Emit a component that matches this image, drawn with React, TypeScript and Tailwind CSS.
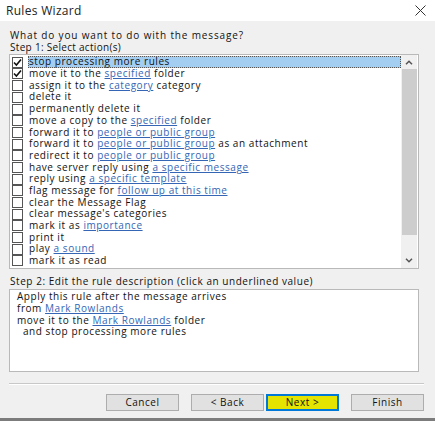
import React from "react";

type Seg = [string, boolean?];

const rows: Seg[][] = [
  [["stop processing more rules"]],
  [["move it to the "], ["specified", true], [" folder"]],
  [["assign it to the "], ["category", true], [" category"]],
  [["delete it"]],
  [["permanently delete it"]],
  [["move a copy to the "], ["specified", true], [" folder"]],
  [["forward it to "], ["people or public group", true]],
  [["forward it to "], ["people or public group", true], [" as an attachment"]],
  [["redirect it to "], ["people or public group", true]],
  [["have server reply using "], ["a specific message", true]],
  [["reply using "], ["a specific template", true]],
  [["flag message for "], ["follow up at this time", true]],
  [["clear the Message Flag"]],
  [["clear message's categories"]],
  [["mark it as "], ["importance", true]],
  [["print it"]],
  [["play "], ["a sound", true]],
  [["mark it as read"]],
];

function Segs({ segs }: { segs: Seg[] }) {
  return (
    <span className="whitespace-pre">
      {segs.map(([t, link], i) =>
        link ? (
          <span key={i} className="text-[#3466b5] underline underline-offset-[1px] decoration-[#3466b5]">
            {t}
          </span>
        ) : (
          <span key={i}>{t}</span>
        )
      )}
    </span>
  );
}

function Check() {
  return (
    <svg width="9" height="9" viewBox="0 0 9 9" className="block">
      <path d="M1 4.5 L3.4 7 L8 1.5" fill="none" stroke="#111" strokeWidth="1.6" />
    </svg>
  );
}

function Chevron({ up }: { up?: boolean }) {
  return (
    <svg width="8" height="5" viewBox="0 0 8 5" className="block">
      <path d={up ? "M1 4.2 L4 1.2 L7 4.2" : "M1 0.8 L4 3.8 L7 0.8"} fill="none" stroke="#555" strokeWidth="1.5" />
    </svg>
  );
}

export default function App() {
  return (
    <div
      className="w-[435px] h-[421px] bg-[#f0f0f0] flex flex-col overflow-hidden text-[#111] text-[10px] leading-[11.7px] tracking-[0.55px]"
      style={{ fontFamily: '"Open Sans", "Noto Sans", Arial, sans-serif' }}
    >
      <div className="h-[21px] bg-white flex items-center justify-between pl-[6px] pr-[9px] shrink-0">
        <span className="text-[12px] tracking-[0.3px] text-[#222]">Rules Wizard</span>
        <svg width="11" height="11" viewBox="0 0 11 11">
          <path d="M0.5 0.5 L10.5 10.5 M10.5 0.5 L0.5 10.5" stroke="#333" strokeWidth="1" />
        </svg>
      </div>

      <div className="pl-[9px] pr-[11px] pt-[9px] flex flex-col">
        <div className="pl-[1px] tracking-[0.85px]">What do you want to do with the message?</div>
        <div className="pl-[1px] tracking-[0.3px]">Step 1: Select action(s)</div>

        <div className="mt-[1px] w-[410px] h-[215px] bg-white border border-[#b9b9b9] flex">
          <div className="flex-1 pt-[1px] flex flex-col">
            {rows.map((segs, i) => {
              const checked = i < 2;
              const sel = i === 0;
              return (
                <div key={i} className="h-[11.7px] flex items-center pl-[2px]">
                  <div className="w-[11px] h-[11px] border border-[#555] bg-white flex items-center justify-center shrink-0">
                    {checked && <Check />}
                  </div>
                  <div
                    className={
                      "ml-[5px] h-full flex items-center pl-[1px] whitespace-nowrap " +
                      (sel ? "flex-1 bg-[#a3cdf1] outline outline-1 outline-dotted outline-[#555] -outline-offset-1" : "")
                    }
                  >
                    <Segs segs={segs} />
                  </div>
                </div>
              );
            })}
          </div>
          <div className="w-[16px] mr-[1px] bg-[#f0f0f0] flex flex-col items-center">
            <div className="h-[14px] flex items-center justify-center">
              <Chevron up />
            </div>
            <div className="w-[15px] h-[166px] bg-[#cdcdcd]" />
            <div className="flex-1" />
            <div className="h-[16px] flex items-center justify-center">
              <Chevron />
            </div>
          </div>
        </div>

        <div className="mt-[7px] pl-[1px]">Step 2: Edit the rule description (click an underlined value)</div>
        <div className="mt-[1px] w-[410px] h-[83px] bg-white border border-[#b9b9b9] pl-[7px] pt-[1px] whitespace-nowrap">
          <div>Apply this rule after the message arrives</div>
          <div>
            <Segs segs={[["from "], ["Mark Rowlands", true]]} />
          </div>
          <div>
            <Segs segs={[["move it to the "], ["Mark Rowlands", true], [" folder"]]} />
          </div>
          <div className="pl-[6px]">and stop processing more rules</div>
        </div>

        <div className="mt-[11px] h-[2px] border-t border-[#c8c8c8] border-b border-b-white" />

        <div className="mt-[9px] flex justify-end">
          <button className="w-[73px] h-[17px] bg-[#e1e1e1] border border-[#adadad] flex items-center justify-center">
            Cancel
          </button>
          <button className="ml-[12px] w-[73px] h-[17px] bg-[#e1e1e1] border border-[#adadad] flex items-center justify-center">
            &lt; Back
          </button>
          <button className="ml-[2px] w-[73px] h-[17px] bg-[#e4e400] border-2 border-[#0078d7] flex items-center justify-center">
            Next &gt;
          </button>
          <button className="ml-[12px] w-[73px] h-[17px] bg-[#e1e1e1] border border-[#adadad] flex items-center justify-center">
            Finish
          </button>
        </div>
      </div>

      <div className="flex-1" />
      <div className="h-[3px] bg-[#7c7c7c] shrink-0" />
    </div>
  );
}
